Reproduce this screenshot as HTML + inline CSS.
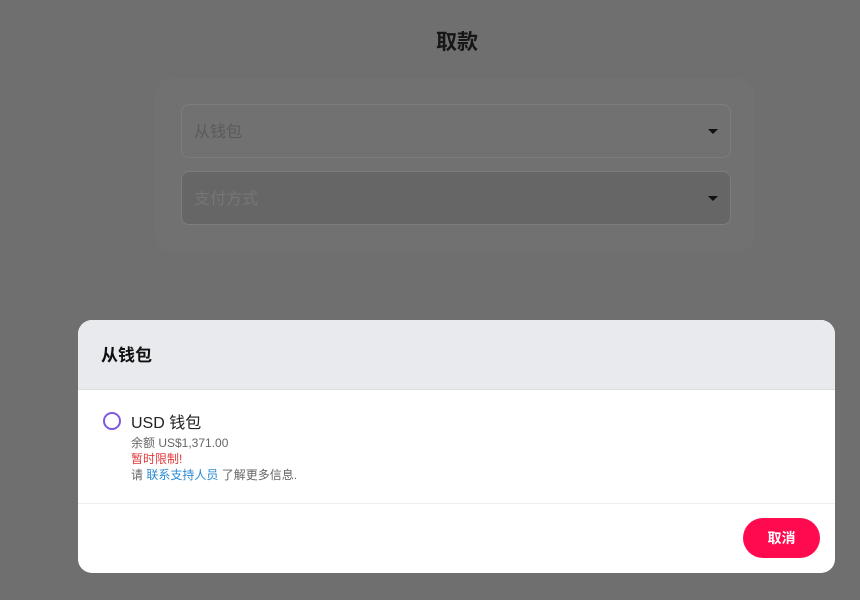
<!DOCTYPE html>
<html><head><meta charset="utf-8"><style>
*{box-sizing:border-box;margin:0;padding:0}
body{width:860px;height:600px;background:#6f6f6f;font-family:"Liberation Sans","Noto Sans CJK SC",sans-serif;position:relative;overflow:hidden}
.title{position:absolute;top:26px;left:407px;width:100px;text-align:center;font-size:21px;font-weight:bold;color:#161616}
.card{position:absolute;left:155px;top:78px;width:600px;height:174px;border-radius:18px;background:#717171}
.sel{position:absolute;left:181px;width:550px;height:54px;border:1px solid #7d7d7d;border-radius:8px;font-size:16px;color:#5a5a5a;padding:13px 12px}
.sel .ar{position:absolute;right:12px;top:24px;width:0;height:0;border-left:5px solid transparent;border-right:5px solid transparent;border-top:5px solid #111}
.modal{position:absolute;left:78px;top:320px;width:757px;height:253px;background:#fff;border-radius:14px;overflow:hidden}
.mh{height:70px;background:#e9eaee;border-bottom:1px solid #dcdcdf;padding:21px 23px;font-size:17px;font-weight:bold;color:#111}
.radio{position:absolute;left:25px;top:92px;width:18px;height:18px;border:2px solid #7b5ae0;border-radius:50%}
.t1{position:absolute;left:53px;top:89px;font-size:16px;color:#222}
.t2{position:absolute;left:53px;top:115px;font-size:12px;color:#666;line-height:16px}
.red{color:#e23a3a}.blue{color:#2b8ad3}
.sep{position:absolute;left:0;top:183px;width:100%;border-top:1px solid #eee}
.btn{position:absolute;left:665px;top:198px;width:77px;height:40px;border-radius:20px;background:#ff0a4e;color:#fff;font-weight:bold;font-size:14px;text-align:center;line-height:40px}
</style></head><body>
<div class="title">取款</div>
<div class="card"></div>
<div class="sel" style="top:104px">从钱包<span class="ar"></span></div>
<div class="sel" style="top:171px;background:#666;color:#767676">支付方式<span class="ar"></span></div>
<div class="modal">
<div class="mh">从钱包</div>
<div class="radio"></div>
<div class="t1">USD 钱包</div>
<div class="t2">余额 US$1,371.00<br><span class="red">暂时限制!</span><br>请 <span class="blue">联系支持人员</span> 了解更多信息.</div>
<div class="sep"></div>
<div class="btn">取消</div>
</div>
</body></html>
